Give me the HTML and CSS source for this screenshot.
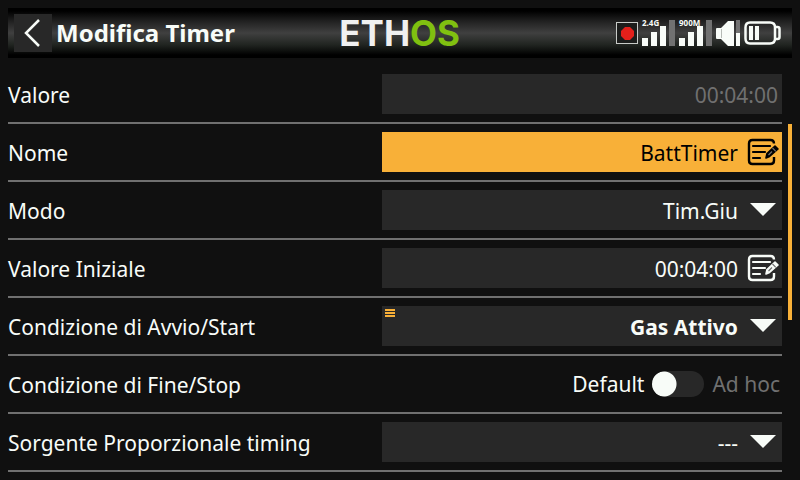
FILE: index.html
```html
<!DOCTYPE html>
<html lang="it">
<head>
<meta charset="utf-8">
<title>Modifica Timer</title>
<link rel="stylesheet" href="styles.css">
</head>
<body>
<svg class="symbols" aria-hidden="true">
  <symbol id="edit" viewBox="0 0 32 28">
    <path d="M27 5.500Q27 2 23.500 2H5.500Q2 2 2 5.500V22.500Q2 26 5.500 26H23.500Q27 26 27 22.500V19" fill="none" stroke="currentColor" stroke-width="2.400"/>
    <path d="M6 8H23M6 14H18M6 20H13" fill="none" stroke="currentColor" stroke-width="2.200" stroke-linecap="round"/>
    <path class="pencil" d="M20 15.500L28 8L31 11L22.500 18.500L19 20Z" stroke-width="1.600" stroke-linejoin="round"/>
    <path class="pencil-mark" d="M25.500 10L28.800 13.300M21.500 17L25 13.500" stroke-width="1.200"/>
  </symbol>
  <symbol id="arrow" viewBox="0 0 26 13"><path d="M0 0H26L13 13Z" fill="currentColor"/></symbol>
</svg>
<header class="topbar">
  <button class="back" type="button" aria-label="Indietro">
    <svg width="38" height="38" viewBox="0 0 38 38"><path d="M25 6L12 19L25 32" fill="none" stroke="currentColor" stroke-width="2.500"/></svg>
  </button>
  <h1 class="title">Modifica Timer</h1>
  <div class="logo">ETH<span class="logo-accent">OS</span></div>
  <div class="status">
    <svg width="22" height="22" viewBox="0 0 22 22"><rect x=".5" y=".5" width="21" height="21" fill="#1c1d1c" stroke="#c8cbc8"/><path d="M9 5H14L18 9V14L14 18H9L5 14V9Z" fill="#e3201b"/></svg>
    <div class="signal">
      <svg width="33" height="26" viewBox="0 0 33 26"><path d="M0 18H6V26H0ZM9 12H15V26H9ZM18 6H24V26H18Z" fill="#f8fcf8"/><path d="M27 0H33V26H27Z" fill="#717171"/></svg>
      <span class="band">2.4G</span>
    </div>
    <div class="signal">
      <svg width="33" height="26" viewBox="0 0 33 26"><path d="M0 18H6V26H0ZM9 12H15V26H9ZM18 6H24V26H18Z" fill="#f8fcf8"/><path d="M27 0H33V26H27Z" fill="#717171"/></svg>
      <span class="band">900M</span>
    </div>
    <svg width="24" height="26" viewBox="0 0 24 26"><path d="M0 9Q0 8 1 8H5L12 1H18V26H12L5 19H1Q0 19 0 18Z" fill="#f8fcf8"/><path d="M5.500 9V18" stroke="#b5bab5"/><path d="M20 0H24V13H20Z" fill="#717171"/><path d="M20 13H24V26H20Z" fill="#f8fcf8"/></svg>
    <svg width="37" height="24" viewBox="0 0 37 24"><path d="M6 1.500H26Q31 1.500 31 6.500V17.500Q31 22.500 26 22.500H6Q1.500 22.500 1.500 17.500V6.500Q1.500 1.500 6 1.500ZM31 6H33.500Q35.500 6 35.500 8V16Q35.500 18 33.500 18H31" fill="none" stroke="#f8fcf8" stroke-width="2.500"/><path d="M5 5H9V19H5ZM11 5H15V19H11Z" fill="#f8fcf8"/></svg>
  </div>
</header>
<main class="page">
  <form class="list">
    <div class="row">
      <label for="valore">Valore</label>
      <div class="field"><input class="control plain" id="valore" type="text" value="00:04:00" disabled></div>
    </div>
    <div class="row">
      <label for="nome">Nome</label>
      <div class="field selected"><input class="control" id="nome" type="text" value="BattTimer"><svg class="edit"><use href="#edit"/></svg></div>
    </div>
    <div class="row">
      <label for="modo">Modo</label>
      <div class="field"><select class="control" id="modo"><option>Tim.Giu</option></select><svg class="arrow"><use href="#arrow"/></svg></div>
    </div>
    <div class="row">
      <label for="iniziale">Valore Iniziale</label>
      <div class="field"><input class="control" id="iniziale" type="text" value="00:04:00"><svg class="edit"><use href="#edit"/></svg></div>
    </div>
    <div class="row">
      <label for="avvio">Condizione di Avvio/Start</label>
      <div class="field"><svg class="menu" viewBox="0 0 10 8"><path d="M0 0H10V2H0ZM0 3H10V5H0ZM0 6H10V8H0Z" fill="#f8b038"/></svg><select class="control strong" id="avvio"><option>Gas Attivo</option></select><svg class="arrow"><use href="#arrow"/></svg></div>
    </div>
    <div class="row">
      <label for="fine">Condizione di Fine/Stop</label>
      <div class="choice"><span>Default</span><input class="toggle" id="fine" type="checkbox"><span class="muted">Ad hoc</span></div>
    </div>
    <div class="row">
      <label for="sorgente">Sorgente Proporzionale timing</label>
      <div class="field"><select class="control" id="sorgente"><option>---</option></select><svg class="arrow"><use href="#arrow"/></svg></div>
    </div>
  </form>
  <div class="scroll"></div>
</main>
</body>
</html>
```
FILE: styles.css
```css
* {
  box-sizing: border-box;
}

body {
  margin: 0;
  padding: 8px;
  height: 100vh;
  overflow: hidden;
  background: #101010;
  color: #f8fcf8;
  font: 21px/40px "Noto Sans", sans-serif;
}

.symbols {
  display: none;
}

.topbar {
  display: grid;
  grid-template-columns: 38px 1fr auto 321px;
  align-items: center;
  height: 50px;
  padding: 0 11px 0 6px;
  background: linear-gradient(#000 0 6%, #202020 26%, #404040 50%, #202420 74%, #000 94%);
}

.back {
  width: 38px;
  height: 38px;
  padding: 0;
  border: 0;
  background: #282828;
  color: inherit;
}

.back svg {
  display: block;
}

.title {
  margin: 0;
  padding-left: 4px;
  font-size: 24px;
  font-weight: 700;
  white-space: nowrap;
}

.logo {
  color: #f0f0f0;
  font: 700 35px/50px Inter, sans-serif;
}

.logo-accent {
  color: #80c010;
}

.status {
  display: flex;
  align-items: center;
  justify-content: flex-end;
  gap: 4px;
}

.status svg {
  display: block;
}

.signal {
  position: relative;
}

.band {
  position: absolute;
  top: -1px;
  left: 0;
  font-size: 8px;
  font-weight: 700;
  line-height: 8px;
}

.page {
  display: flex;
  gap: 6px;
  padding-top: 8px;
}

.list {
  flex: 1;
}

.row {
  display: grid;
  grid-template-columns: 374fr 400fr;
  padding: 8px 0;
  border-bottom: 2px solid #707070;
}

.row label {
  height: 40px;
  line-height: 42px;
  white-space: nowrap;
}

.field {
  position: relative;
  height: 40px;
  background: #282828;
}

.selected {
  background: #f8b038;
  color: #000;
}

.control {
  display: block;
  width: 100%;
  height: 40px;
  margin: 0;
  padding: 2px 44px 0 20px;
  border: 0;
  border-radius: 0;
  outline: 0;
  appearance: none;
  background: transparent;
  color: inherit;
  font: inherit;
  line-height: 38px;
  text-align: right;
  text-align-last: right;
}

.plain {
  padding-right: 4px;
}

.control:disabled,
.muted {
  color: #707070;
}

.strong {
  font-weight: 700;
}

.edit,
.arrow,
.menu {
  position: absolute;
  pointer-events: none;
}

.edit {
  top: 6px;
  right: 3px;
  width: 32px;
  height: 28px;
}

.pencil {
  fill: currentColor;
  stroke: currentColor;
}

.pencil-mark {
  stroke: #707070;
}

.arrow {
  top: 13px;
  right: 6px;
  width: 26px;
  height: 13px;
}

.menu {
  top: 3px;
  left: 3px;
  width: 10px;
  height: 8px;
}

.choice {
  display: flex;
  align-items: center;
  justify-content: flex-end;
  gap: 8px;
  height: 40px;
  padding-right: 2px;
  line-height: 42px;
}

.toggle {
  width: 52px;
  height: 26px;
  margin: 0;
  appearance: none;
  border-radius: 13px;
  background: radial-gradient(circle at 12px 13px, #f8fcf8 12px, #282828 13px);
}

.scroll {
  width: 4px;
  height: 196px;
  margin-top: 58px;
  background: #f8b038;
}
```
